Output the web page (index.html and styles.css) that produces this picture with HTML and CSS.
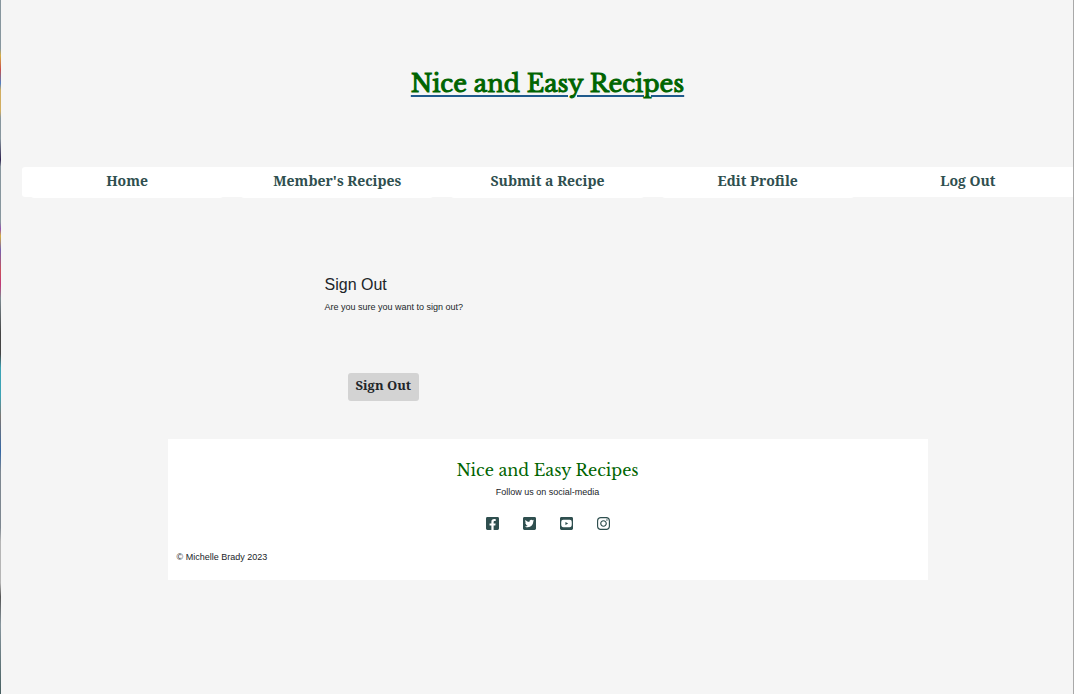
FILE: index.html
```html
<!DOCTYPE html>
<html lang="en">
<head>
<meta charset="utf-8">
<meta name="viewport" content="width=device-width, initial-scale=1">
<title>Nice and Easy Recipes</title>
<link rel="stylesheet" href="styles.css">
</head>
<body>
<div class="page">
  <header class="header">
    <h1 class="title"><a class="title-link" href="#">Nice and Easy Recipes</a></h1>
  </header>
  <nav class="nav">
    <a class="nav-link" href="#">Home</a>
    <a class="nav-link" href="#">Member's Recipes</a>
    <a class="nav-link" href="#">Submit a Recipe</a>
    <a class="nav-link" href="#">Edit Profile</a>
    <a class="nav-link" href="#">Log Out</a>
  </nav>
  <main class="main">
    <h2 class="heading">Sign Out</h2>
    <p class="text">Are you sure you want to sign out?</p>
    <button class="button" type="submit">Sign Out</button>
  </main>
  <footer class="footer">
    <h2 class="footer-title">Nice and Easy Recipes</h2>
    <p class="text">Follow us on social-media</p>
    <div class="social">
      <a class="social-link" href="#" aria-label="Facebook"><svg class="icon" viewBox="0 0 448 512"><path d="M400 32H48A48 48 0 0 0 0 80v352a48 48 0 0 0 48 48h137.250V327.690h-63V256h63v-54.640c0-62.150 37-96.480 93.670-96.480 27.140 0 55.520 4.840 55.520 4.840v61h-31.270c-30.810 0-40.420 19.120-40.420 38.730V256h68.780l-11 71.690h-57.780V480H400a48 48 0 0 0 48-48V80a48 48 0 0 0-48-48z"/></svg></a>
      <a class="social-link" href="#" aria-label="Twitter"><svg class="icon" viewBox="0 0 448 512"><path d="M400 32H48C21.500 32 0 53.500 0 80v352c0 26.500 21.500 48 48 48h352c26.500 0 48-21.500 48-48V80c0-26.500-21.500-48-48-48zm-48.900 158.800c.2 2.800.2 5.700.2 8.500 0 86.700-66 186.600-186.600 186.600-37.200 0-71.700-10.800-100.700-29.400 5.300.6 10.400.8 15.800.8 30.700 0 58.900-10.400 81.400-28-28.800-.6-53-19.500-61.300-45.500 10.100 1.500 19.200 1.500 29.600-1.200-30-6.100-52.500-32.500-52.500-64.400v-.8c8.700 4.900 18.900 7.900 29.600 8.300a65.447 65.447 0 0 1-29.200-54.600c0-12.200 3.200-23.400 8.900-33.100 32.300 39.800 80.800 65.800 135.200 68.600-9.300-44.500 24-80.600 64-80.600 18.900 0 35.900 7.900 47.900 20.700 14.800-2.800 29-8.300 41.600-15.800-4.900 15.200-15.200 28-28.800 36.100 13.200-1.400 26-5.100 37.800-10.200-8.900 13.100-20.100 24.700-32.900 34z"/></svg></a>
      <a class="social-link" href="#" aria-label="YouTube"><svg class="icon" viewBox="0 0 448 512"><path d="M186.800 202.100l95.200 54.100-95.200 54.100V202.100zM448 80v352c0 26.500-21.500 48-48 48H48c-26.500 0-48-21.500-48-48V80c0-26.500 21.500-48 48-48h352c26.500 0 48 21.500 48 48zm-42 176.300s0-59.600-7.600-88.200c-4.200-15.800-16.500-28.200-32.200-32.400C337.900 128 224 128 224 128s-113.900 0-142.200 7.700c-15.700 4.200-28 16.600-32.200 32.400-7.600 28.500-7.600 88.200-7.600 88.200s0 59.600 7.600 88.200c4.200 15.800 16.500 27.700 32.200 31.900C110.100 384 224 384 224 384s113.900 0 142.200-7.700c15.700-4.200 28-16.100 32.200-31.900 7.600-28.500 7.600-88.100 7.600-88.100z"/></svg></a>
      <a class="social-link" href="#" aria-label="Instagram"><svg class="icon" viewBox="0 0 448 512"><path d="M224.100 141c-63.600 0-114.900 51.300-114.900 114.900s51.300 114.900 114.900 114.900S339 319.500 339 255.900 287.700 141 224.100 141zm0 189.600c-41.100 0-74.700-33.500-74.700-74.700s33.500-74.700 74.700-74.700 74.700 33.500 74.700 74.700-33.600 74.700-74.700 74.700zm146.400-194.300c0 14.900-12 26.800-26.800 26.800-14.900 0-26.800-12-26.800-26.800s12-26.800 26.800-26.800 26.800 12 26.800 26.800zm76.100 27.200c-1.700-35.900-9.900-67.700-36.200-93.900-26.200-26.200-58-34.400-93.900-36.200-37-2.100-147.900-2.100-184.900 0-35.800 1.700-67.600 9.900-93.900 36.100s-34.400 58-36.200 93.900c-2.100 37-2.100 147.900 0 184.900 1.700 35.900 9.900 67.700 36.200 93.900s58 34.400 93.900 36.200c37 2.100 147.900 2.100 184.900 0 35.900-1.700 67.700-9.900 93.900-36.200 26.200-26.200 34.400-58 36.200-93.900 2.100-37 2.100-147.800 0-184.800zM398.800 388c-7.800 19.600-22.900 34.700-42.600 42.600-29.500 11.700-99.500 9-132.100 9s-102.700 2.600-132.100-9c-19.600-7.800-34.700-22.900-42.600-42.600-11.700-29.500-9-99.500-9-132.100s-2.600-102.700 9-132.100c7.800-19.600 22.900-34.700 42.600-42.600 29.500-11.700 99.500-9 132.100-9s102.700-2.600 132.100 9c19.600 7.800 34.700 22.900 42.600 42.600 11.700 29.500 9 99.500 9 132.100s2.700 102.700-9 132.100z"/></svg></a>
    </div>
    <p class="text copyright">© Michelle Brady 2023</p>
  </footer>
</div>
</body>
</html>
```
FILE: styles.css
```css
* {
  box-sizing: border-box;
}

body {
  margin: 0;
  font-family: "Liberation Sans", Arial, sans-serif;
  color: #212529;
  background: #f5f5f5;
}

.page {
  min-height: 100vh;
  padding-left: 22px;
  border-right: 1px solid #a9a9a9;
  background: linear-gradient(#87969e 0 7%, #d5ae42 8%, #c94f4a 10%, #4e7fc4 12%, #d1ad60 13% 16%, #87969e 17% 20%, #2f2350 23%, #87969e 24% 32%, #9250ae 33%, #d5ae42 34%, #7560ae 36%, #c94f5a 39%, #c03878 41%, #7d8b92 43%, #444 48% 51%, #3ba3b5 53% 57%, #7d7672 60%, #3467a5 65%, #7d8790 68% 76%, #b5b5b5 78% 84%, #555 86%, #87969e 90%, #465e60) left / 1px 100% no-repeat;
}

.header {
  padding: 64px 0 63px;
}

.title {
  margin: 0;
  font-family: "Libre Baskerville", "Liberation Serif", serif;
  font-size: 24px;
  line-height: 40px;
  font-weight: 400;
  text-align: center;
}

.title-link {
  color: #006400;
  -webkit-text-stroke: 1px #006400;
  text-decoration: underline 2px #1f5a8c;
  text-underline-offset: 3px;
}

.nav {
  display: grid;
  grid-template-columns: repeat(5, 1fr);
  height: 30px;
  background: #fff;
  border-radius: 3px 0 0 3px;
}

.nav-link {
  height: 31px;
  margin: 0 9px;
  border-radius: 3px;
  background: #fff;
  font-family: "Noto Serif", "Liberation Serif", serif;
  font-size: 14px;
  line-height: 28px;
  font-weight: 700;
  text-align: center;
  text-decoration: none;
  color: #2f4f4f;
}

.nav-link:last-child {
  height: 30px;
}

.main {
  max-width: 446px;
  margin: 0 auto;
  padding: 78px 0 38px;
}

.heading {
  margin: 0 0 5px;
  font-size: 16px;
  line-height: 20px;
  font-weight: 400;
}

.text {
  margin: 0;
  font-size: 9px;
  line-height: 14px;
}

.button {
  display: block;
  height: 28px;
  margin: 59px 0 0 23px;
  padding: 0 8px 4px;
  border: 0;
  border-radius: 3px;
  background: #d3d3d3;
  color: #212529;
  font-family: "Noto Serif", "Liberation Serif", serif;
  font-size: 13px;
  font-weight: 700;
}

.footer {
  max-width: 760px;
  margin: 0 auto;
  padding: 19px 9px 16px;
  background: #fff;
  text-align: center;
}

.footer-title {
  margin: 0 0 3px;
  font-family: "Libre Baskerville", "Liberation Serif", serif;
  font-size: 16px;
  line-height: 24px;
  font-weight: 400;
  color: #006400;
}

.social {
  display: flex;
  justify-content: center;
  gap: 24px;
  padding: 17px 0 19px;
}

.social-link {
  display: block;
  color: #2f4f4f;
}

.icon {
  display: block;
  width: 13px;
  height: 15px;
  fill: currentColor;
}

.copyright {
  text-align: left;
}
```
